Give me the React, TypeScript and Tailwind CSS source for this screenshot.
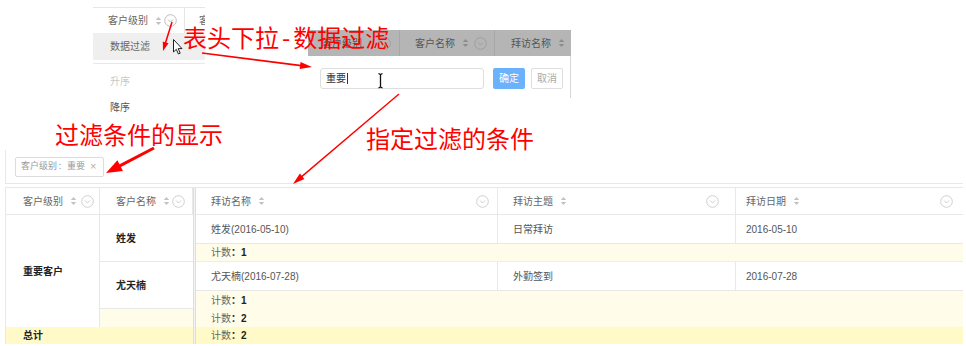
import React from "react";

const SortIcon = ({ className = "" }: { className?: string }) => (
  <svg width="7" height="10" viewBox="0 0 7 10" className={`shrink-0 ${className}`}>
    <path d="M0.8 4 L3.5 1 L6.2 4 Z" fill="#c2c2c2" />
    <path d="M0.8 6 L3.5 9 L6.2 6 Z" fill="#c2c2c2" />
  </svg>
);

const CircleDown = ({ color = "#cfcfcf" }: { color?: string }) => (
  <svg width="13" height="13" viewBox="0 0 13 13" className="shrink-0">
    <circle cx="6.5" cy="6.5" r="5.8" fill="none" stroke={color} strokeWidth="1" />
    <polyline points="4,5.5 6.5,8 9,5.5" fill="none" stroke={color} strokeWidth="1" />
  </svg>
);

type ArrowProps = { x1: number; y1: number; x2: number; y2: number; w: number; hl: number; hw: number };
const Arrow = ({ x1, y1, x2, y2, w, hl, hw }: ArrowProps) => {
  const dx = x2 - x1;
  const dy = y2 - y1;
  const len = Math.hypot(dx, dy);
  const ux = dx / len;
  const uy = dy / len;
  const bx = x2 - ux * hl;
  const by = y2 - uy * hl;
  const px = -uy;
  const py = ux;
  const pts = `${x2},${y2} ${bx + px * hw},${by + py * hw} ${bx - px * hw},${by - py * hw}`;
  return (
    <g>
      <line x1={x1} y1={y1} x2={bx + ux * 1} y2={by + uy * 1} stroke="#ff0000" strokeWidth={w} />
      <polygon points={pts} fill="#ff0000" />
    </g>
  );
};

const HeadCell = ({ label, pl, circleMr, last = false }: { label: string; pl: string; circleMr: string; last?: boolean }) => (
  <div className={`flex items-center whitespace-nowrap border-b ${last ? "" : "border-r"} border-[#e8e8e8] ${pl} ${circleMr} text-[10px] text-[#666]`}>
    <span>{label}</span>
    <SortIcon className="ml-[7px]" />
    <span className="flex-1" />
    <CircleDown />
  </div>
);

const Count = ({ n }: { n: number }) => (
  <span className="text-[10px] text-[#666] whitespace-nowrap">
    计数<b className="text-[#222]">：{n}</b>
  </span>
);

export default function App() {
  return (
    <div className="relative w-[966px] h-[346px] bg-white overflow-hidden font-['Liberation_Sans','Noto_Sans_CJK_SC',sans-serif]">
      {/* main flow: tag bar + table */}
      <div className="pt-[150px] pl-[5px] pr-[3px]">
        <div className="h-[34px] border-l border-b border-[#e8e8e8] flex items-center pl-[9px]">
          <div className="h-[20px] w-[89px] border border-[#dcdcdc] rounded-[2px] flex items-center pl-[5px] text-[9px] text-[#9a9a9a] whitespace-nowrap">
            <span>客户级别</span>
            <span className="mx-[1px] text-[8px]">：</span>
            <span>重要</span>
            <span className="ml-[5px] text-[11px] text-[#b0b0b0]">×</span>
          </div>
        </div>
        <div className="mt-[3px] grid grid-cols-[94px_93px_3px_302px_238px_1fr] grid-rows-[27px_29px_18px_29px_18px_18px_17px] border-t border-l border-[#e8e8e8]">
          {/* header */}
          <HeadCell label="客户级别" pl="pl-[17px]" circleMr="pr-[5px]" />
          <HeadCell label="客户名称" pl="pl-[16px]" circleMr="pr-[7px]" />
          <div className="row-span-7 col-start-3 row-start-1 bg-[#f3f3f3] border-l border-r border-[#dedede]" />
          <HeadCell label="拜访名称" pl="pl-[15px]" circleMr="pr-[8px]" />
          <HeadCell label="拜访主题" pl="pl-[15px]" circleMr="pr-[16px]" />
          <HeadCell label="拜访日期" pl="pl-[10px]" circleMr="pr-[10px]" last />

          {/* left fixed part */}
          <div className="col-start-1 row-start-2 row-span-5 flex items-center pl-[17px] border-r border-[#e8e8e8] text-[10px] font-bold text-[#222]">
            重要客户
          </div>
          <div className="col-start-2 row-start-2 row-span-2 flex items-center pl-[16px] border-b border-[#e8e8e8] text-[10px] font-bold text-[#222]">
            姓发
          </div>
          <div className="col-start-2 row-start-4 row-span-2 flex items-center pl-[16px] border-b border-[#e8e8e8] text-[10px] font-bold text-[#222]">
            尤天楠
          </div>
          <div className="col-start-2 row-start-6 bg-[#fffde9]" />
          <div className="col-start-1 col-span-2 row-start-7 flex items-center pl-[17px] bg-[#fffac8] text-[10px] font-bold text-[#222]">
            总计
          </div>

          {/* right part */}
          <div className="col-start-4 row-start-2 flex items-center pl-[15px] border-b border-r border-[#e8e8e8] text-[10px] text-[#555]">
            姓发(2016-05-10)
          </div>
          <div className="col-start-5 row-start-2 flex items-center pl-[15px] border-b border-r border-[#e8e8e8] text-[10px] text-[#555]">
            日常拜访
          </div>
          <div className="col-start-6 row-start-2 flex items-center pl-[10px] border-b border-[#e8e8e8] text-[10px] text-[#555]">
            2016-05-10
          </div>
          <div className="col-start-4 col-span-3 row-start-3 flex items-center pl-[15px] bg-[#fffde9] border-b border-[#efefe0]">
            <Count n={1} />
          </div>
          <div className="col-start-4 row-start-4 flex items-center pl-[15px] border-b border-r border-[#e8e8e8] text-[10px] text-[#555]">
            尤天楠(2016-07-28)
          </div>
          <div className="col-start-5 row-start-4 flex items-center pl-[15px] border-b border-r border-[#e8e8e8] text-[10px] text-[#555]">
            外勤签到
          </div>
          <div className="col-start-6 row-start-4 flex items-center pl-[10px] border-b border-[#e8e8e8] text-[10px] text-[#555]">
            2016-07-28
          </div>
          <div className="col-start-4 col-span-3 row-start-5 flex items-center pl-[15px] bg-[#fffde9]">
            <Count n={1} />
          </div>
          <div className="col-start-4 col-span-3 row-start-6 flex items-center pl-[15px] bg-[#fffde9]">
            <Count n={2} />
          </div>
          <div className="col-start-4 col-span-3 row-start-7 flex items-center pl-[15px] bg-[#fffac8]">
            <Count n={2} />
          </div>
        </div>
      </div>

      {/* floating: header dropdown crop */}
      <div className="absolute left-[93px] top-[7px] w-[112px] h-[112px] overflow-hidden bg-white">
        <div className="h-[26px] border-t border-[#e6e6e6] flex">
          <div className="w-[92px] shrink-0 flex items-center pl-[15px] pr-[7px] border-r border-[#e6e6e6] text-[10px] text-[#666] whitespace-nowrap">
            <span>客户级别</span>
            <SortIcon className="ml-[7px]" />
            <span className="flex-1" />
            <CircleDown color="#bdbdbd" />
          </div>
          <div className="shrink-0 flex items-center pl-[14px] text-[10px] text-[#666] whitespace-nowrap">客户名称</div>
        </div>
        <div className="h-[27px] bg-[#efefef] flex items-center pl-[17px] text-[10px] text-[#666]">数据过滤</div>
        <div className="h-[3px]" />
        <div className="h-px bg-[#e8e8e8]" />
        <div className="h-[26px] mt-[4px] flex items-center pl-[17px] text-[10px] text-[#c8c8c8]">升序</div>
        <div className="h-[27px] flex items-center pl-[17px] text-[10px] text-[#555]">降序</div>
      </div>

      {/* floating: filter popup crop */}
      <div className="absolute left-[308px] top-[30px] w-[263px] h-[68px] overflow-hidden">
        <div className="h-[26px] bg-[#b5b5b5] flex">
          <div className="w-[92px] shrink-0 flex items-center pl-[14px] pr-[8px] border-r border-[#a8a8a8] text-[10px] text-[#555] whitespace-nowrap">
            <span>客户级别</span>
            <span className="flex-1" />
            <CircleDown color="#9e9e9e" />
          </div>
          <div className="w-[95px] shrink-0 flex items-center pl-[15px] pr-[7px] border-r border-[#a8a8a8] text-[10px] text-[#555] whitespace-nowrap">
            <span>客户名称</span>
            <svg width="7" height="10" viewBox="0 0 7 10" className="ml-[7px] shrink-0">
              <path d="M0.8 4 L3.5 1 L6.2 4 Z" fill="#8c8c8c" />
              <path d="M0.8 6 L3.5 9 L6.2 6 Z" fill="#8c8c8c" />
            </svg>
            <span className="flex-1" />
            <CircleDown color="#9e9e9e" />
          </div>
          <div className="flex-1 flex items-center pl-[16px] text-[10px] text-[#555] whitespace-nowrap">
            <span>拜访名称</span>
            <svg width="7" height="10" viewBox="0 0 7 10" className="ml-[7px] shrink-0">
              <path d="M0.8 4 L3.5 1 L6.2 4 Z" fill="#8c8c8c" />
              <path d="M0.8 6 L3.5 9 L6.2 6 Z" fill="#8c8c8c" />
            </svg>
          </div>
        </div>
        <div className="h-[42px] bg-white border-r border-[#d8d8d8] flex items-start pt-[12px] pl-[12px]">
          <div className="w-[164px] shrink-0 h-[21px] border border-[#dedede] rounded-[3px] flex items-center pl-[5px] text-[10px] text-[#333]">
            重要<span className="w-px h-[11px] bg-[#333] ml-px" />
          </div>
          <div className="ml-[9px] shrink-0 w-[32px] h-[21px] rounded-[2px] bg-[#6ab2fc] flex items-center justify-center text-[10px] text-white">
            确定
          </div>
          <div className="ml-[6px] shrink-0 w-[32px] h-[21px] rounded-[2px] border border-[#dedede] flex items-center justify-center text-[10px] text-[#aaa]">
            取消
          </div>
        </div>
      </div>

      {/* cursors */}
      <svg className="absolute left-0 top-0 pointer-events-none" width="966" height="346">
        <path d="M173.5 39.5 L173.5 52 L176.3 49.3 L178.4 54 L180.2 53.2 L178.2 48.6 L182 48.6 Z" fill="#fff" stroke="#222" strokeWidth="1" />
        <path d="M378.5 73.5 L380.5 74.5 L382.5 73.5 M380.5 74.5 L380.5 87 M378.5 88 L380.5 87 L382.5 88" fill="none" stroke="#111" strokeWidth="1.3" />
      </svg>

      {/* red annotation texts */}
      <div className="absolute left-[183px] top-[25px] text-[24px] leading-[24px] text-[#ff0000] whitespace-nowrap font-['Noto_Sans_CJK_SC',sans-serif]">
        表头下拉<span className="mx-[3px]">-</span>数据过滤
      </div>
      <div className="absolute left-[55px] top-[122px] text-[24px] leading-[24px] text-[#ff0000] whitespace-nowrap font-['Noto_Sans_CJK_SC',sans-serif]">
        过滤条件的显示
      </div>
      <div className="absolute left-[366px] top-[126px] text-[24px] leading-[24px] text-[#ff0000] whitespace-nowrap font-['Noto_Sans_CJK_SC',sans-serif]">
        指定过滤的条件
      </div>

      {/* red arrows */}
      <svg className="absolute left-0 top-0 pointer-events-none" width="966" height="346">
        <Arrow x1={172} y1={22} x2={163} y2={51} w={1.6} hl={9} hw={3} />
        <Arrow x1={202} y1={53} x2={312} y2={67} w={1.6} hl={12} hw={3.5} />
        <Arrow x1={399} y1={94} x2={293} y2={184} w={1.4} hl={12} hw={3.5} />
        <Arrow x1={154} y1={148} x2={106} y2={173} w={3} hl={16} hw={6} />
      </svg>
    </div>
  );
}
